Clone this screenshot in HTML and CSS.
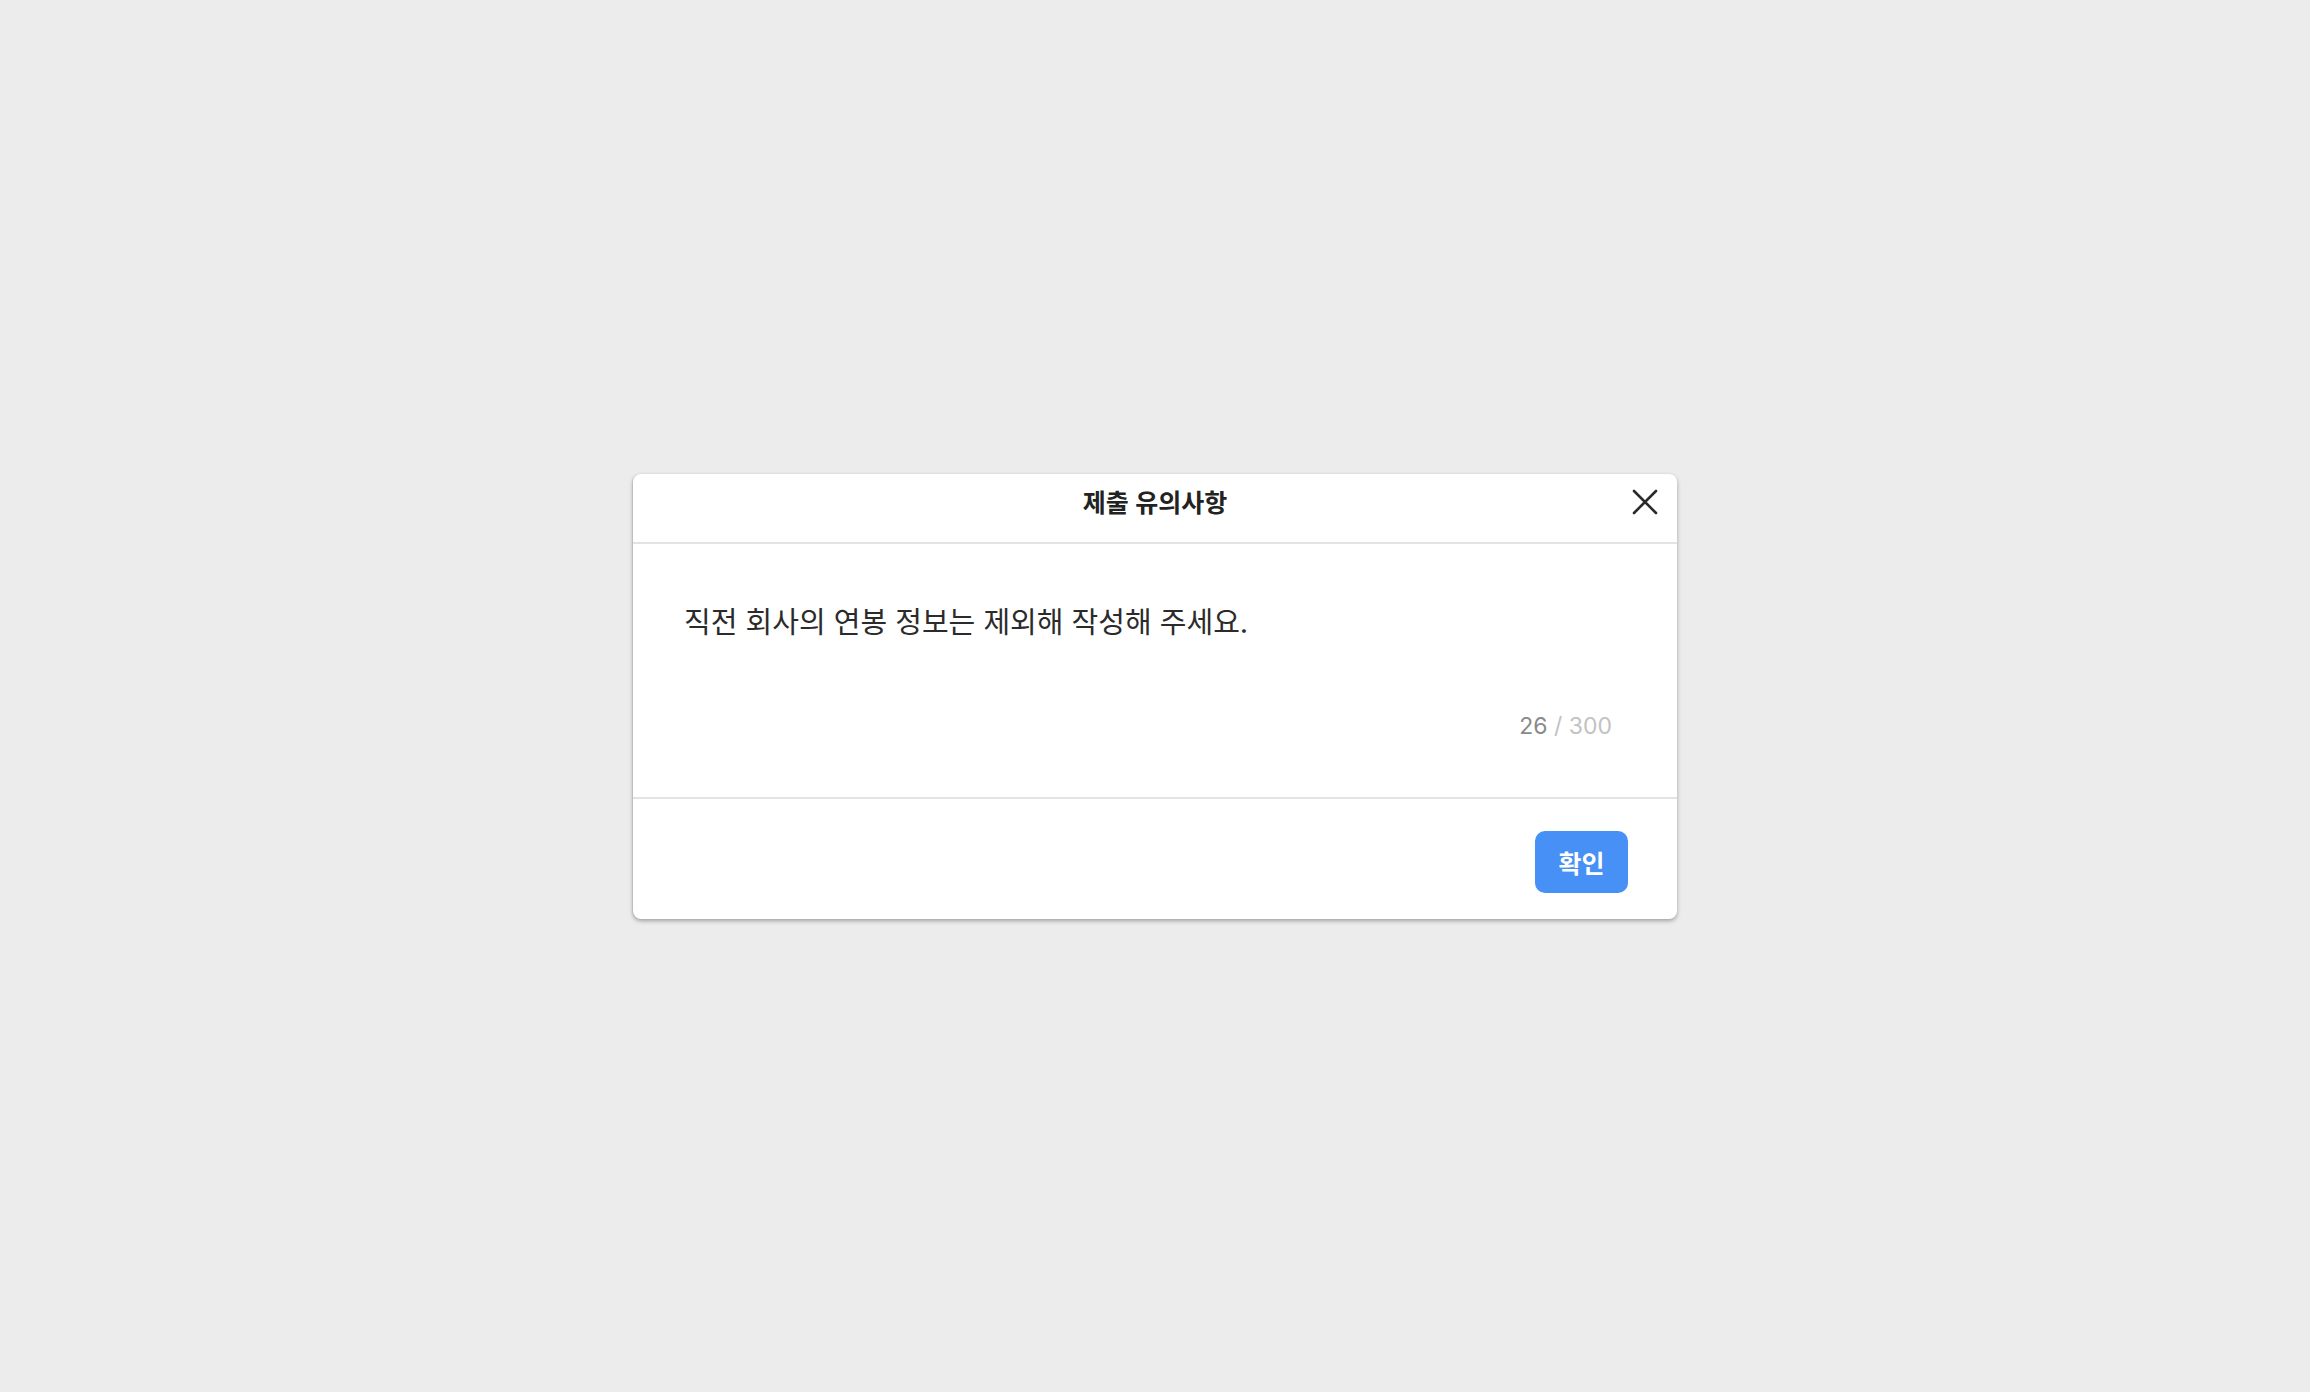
FILE: index.html
```html
<!DOCTYPE html>
<html lang="ko">
<head>
<meta charset="utf-8">
<title>제출 유의사항</title>
<link rel="stylesheet" href="styles.css">
</head>
<body>
<div class="page">
  <div class="modal">
    <div class="modal-header">
      <h2 class="modal-title">제출 유의사항</h2>
      <button class="close-btn" aria-label="닫기">
        <svg width="26" height="26" viewBox="0 0 26 26"><path d="M2 2 L24 24 M24 2 L2 24" stroke="#2a2a2a" stroke-width="2.6" stroke-linecap="round" fill="none"/></svg>
      </button>
    </div>
    <div class="modal-body">
      <p class="body-text">직전 회사의 연봉 정보는 제외해 작성해 주세요.</p>
      <div class="counter"><span class="count">26</span> / 300</div>
    </div>
    <div class="modal-footer">
      <button class="confirm-btn">확인</button>
    </div>
  </div>
</div>
</body>
</html>
```
FILE: styles.css
```css
html, body {
  margin: 0;
  padding: 0;
  background: #ececec;
}
body {
  font-family: Inter, "Noto Sans CJK KR", sans-serif;
  color: #2b2b2b;
}
.page {
  width: 2310px;
  height: 1392px;
  display: flex;
  align-items: center;
  justify-content: center;
}
.modal {
  width: 1044px;
  background: #fff;
  border-radius: 8px;
  box-shadow: 0 2px 4px rgba(0,0,0,0.32), -1px 0 1px rgba(0,0,0,0.08);
  display: flex;
  flex-direction: column;
}
.modal-header {
  position: relative;
  height: 68px;
  border-bottom: 2px solid #e3e3e3;
  display: flex;
  justify-content: center;
}
.modal-title {
  margin: 0;
  padding-top: 12px;
  font-size: 25px;
  font-weight: 600;
  line-height: 34px;
  color: #222;
}
.close-btn {
  position: absolute;
  right: 19px;
  top: 15px;
  width: 26px;
  height: 26px;
  padding: 0;
  border: 0;
  background: none;
  display: flex;
}
.modal-body {
  height: 255px;
  padding: 0 65px 0 51px;
  display: flex;
  flex-direction: column;
  box-sizing: border-box;
  border-bottom: 2px solid #e3e3e3;
}
.body-text {
  margin: 59px 0 0;
  font-size: 29px;
  line-height: 40px;
  color: #2b2b2b;
}
.counter {
  margin-top: 68px;
  align-self: flex-end;
  font-size: 23px;
  line-height: 30px;
  color: #c2c2c2;
}
.count {
  color: #8a8a8a;
}
.modal-footer {
  height: 120px;
  display: flex;
  justify-content: flex-end;
  align-items: center;
  padding-right: 49px;
  padding-top: 6px;
  box-sizing: border-box;
}
.confirm-btn {
  width: 93px;
  height: 62px;
  border: 0;
  border-radius: 10px;
  background: #4690f6;
  color: #fff;
  font-family: "Noto Sans CJK KR", sans-serif;
  font-size: 25px;
  font-weight: 600;
  padding: 0;
}
```
